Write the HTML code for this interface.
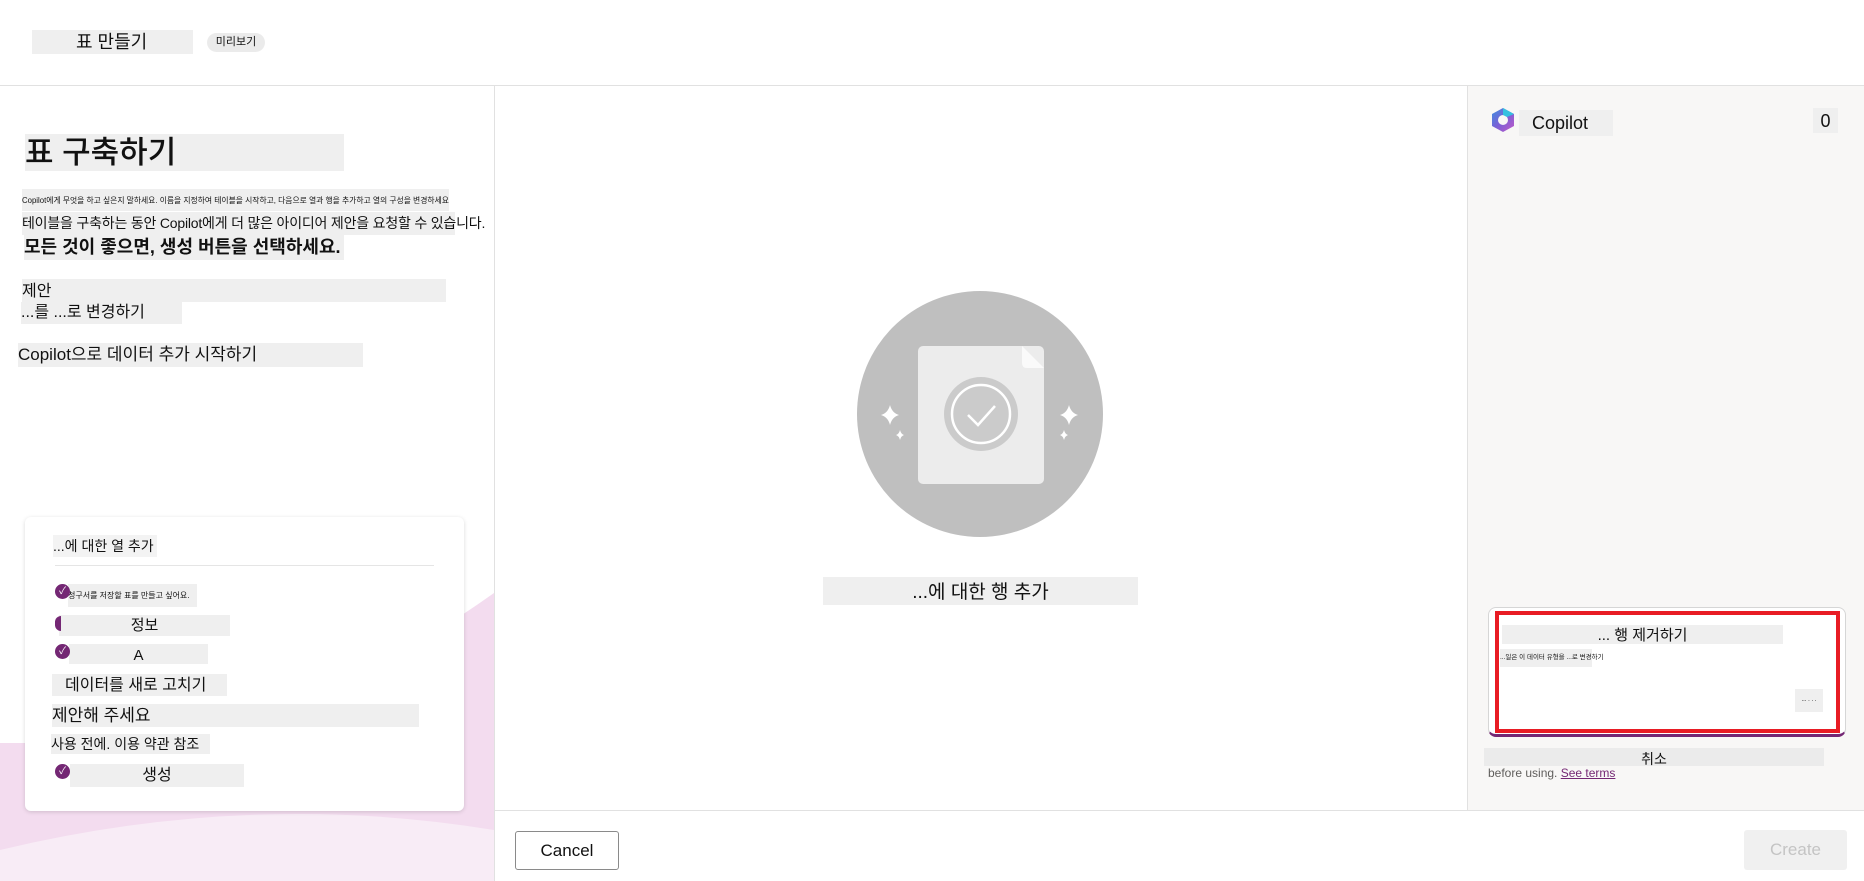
<!DOCTYPE html>
<html><head><meta charset="utf-8"><style>
*{margin:0;padding:0;box-sizing:border-box}
body{width:1864px;height:881px;background:#fff;font-family:"Liberation Sans","Noto Sans CJK KR",sans-serif;color:#111;position:relative;overflow:hidden}
.a{position:absolute;white-space:nowrap;overflow:visible}
.g{background:#efefef}
</style></head><body>
<div class="a g" style="left:32px;top:30px;width:161px;height:24px;font-size:18px;line-height:24px;padding-left:44px">표 만들기</div>
<div class="a" style="left:207px;top:33px;width:58px;height:19px;background:#ebebeb;border-radius:10px;font-size:11px;line-height:19px;text-align:center">미리보기</div>
<div class="a" style="left:0;top:85px;width:1864px;height:1px;background:#e1e1e1"></div>

<!-- left panel -->
<div class="a" style="left:494px;top:85px;width:1px;height:796px;background:#e1e1e1"></div>
<svg class="a" style="left:0;top:580px" width="494" height="301"><path d="M0 163 L150 163 Q330 130 494 13 L494 301 L0 301Z" fill="#f3dcef"/><path d="M0 301 L0 270 Q250 210 494 250 L494 301Z" fill="#f8ecf6"/></svg>
<div class="a g" style="left:25px;top:134px;width:319px;height:37px;font-size:31px;line-height:37px;font-weight:bold;font-weight:500">표 구축하기</div>
<div class="a g" style="left:22px;top:189px;width:427px;height:22px;font-size:7.8px;line-height:24px;overflow:hidden">Copilot에게 무엇을 하고 싶은지 말하세요. 이름을 지정하여 테이블을 시작하고, 다음으로 열과 행을 추가하고 열의 구성을 변경하세요.</div>
<div class="a g" style="left:22px;top:212px;width:433px;height:23px;font-size:14px;line-height:23px;letter-spacing:-0.2px">테이블을 구축하는 동안 Copilot에게 더 많은 아이디어 제안을 요청할 수 있습니다.</div>
<div class="a g" style="left:24px;top:235px;width:320px;height:25px;font-size:18px;line-height:25px;font-weight:bold">모든 것이 좋으면, 생성 버튼을 선택하세요.</div>
<div class="a g" style="left:22px;top:279px;width:424px;height:23px;font-size:16px;line-height:26px">제안</div>
<div class="a g" style="left:21px;top:302px;width:161px;height:22px;font-size:16px;line-height:22px">...를 ...로 변경하기</div>
<div class="a g" style="left:18px;top:343px;width:345px;height:24px;font-size:17px;line-height:24px">Copilot으로 데이터 추가 시작하기</div>

<div class="a" style="left:25px;top:517px;width:439px;height:294px;background:#fff;border-radius:6px;box-shadow:0 1px 4px rgba(0,0,0,.15)"></div>
<div class="a g" style="left:53px;top:535px;width:104px;height:22px;font-size:14px;line-height:22px;background:#f3f3f3">...에 대한 열 추가</div>
<div class="a" style="left:55px;top:565px;width:379px;height:1px;background:#e5e5e5"></div>
<div class="a g" style="left:68px;top:584px;width:129px;height:23px;font-size:8px;line-height:24px">청구서를 저장할 표를 만들고 싶어요.</div>
<div class="a g" style="left:59px;top:615px;width:171px;height:21px;font-size:15px;line-height:22px;text-align:center">정보</div>
<div class="a g" style="left:69px;top:644px;width:139px;height:20px;font-size:15px;line-height:24px;text-align:center">A</div>
<div class="a g" style="left:52px;top:674px;width:175px;height:22px;font-size:16px;line-height:24px;padding-left:13px">데이터를 새로 고치기</div>
<div class="a g" style="left:52px;top:704px;width:367px;height:23px;font-size:17px;line-height:23px">제안해 주세요</div>
<div class="a g" style="left:51px;top:734px;width:159px;height:20px;font-size:14px;line-height:20px">사용 전에. 이용 약관 참조</div>
<div class="a g" style="left:70px;top:764px;width:174px;height:23px;font-size:16px;line-height:24px;text-align:center">생성</div>
<div class="a" style="left:55px;top:584px;width:15px;height:15px;border-radius:50%;background:#742774;color:#fff;font-size:10px;line-height:15px;text-align:center">✓</div>
<div class="a" style="left:55px;top:616px;width:6px;height:15px;border-radius:8px 0 0 8px;background:#742774"></div>
<div class="a" style="left:55px;top:644px;width:15px;height:15px;border-radius:50%;background:#742774;color:#fff;font-size:10px;line-height:15px;text-align:center">✓</div>
<div class="a" style="left:55px;top:764px;width:15px;height:15px;border-radius:50%;background:#742774;color:#fff;font-size:10px;line-height:15px;text-align:center">✓</div>

<!-- center -->
<svg class="a" style="left:855px;top:292px" width="250" height="245">
<circle cx="125" cy="122" r="123" fill="#bfbfbf"/>
<rect x="63" y="54" width="126" height="138" rx="5" fill="#ececec"/>
<path d="M167 54 L189 76 L172 76 Q167 76 167 71Z" fill="#fafafa"/>
<circle cx="126" cy="122" r="37" fill="#cbcbcb"/>
<circle cx="126" cy="122" r="29" fill="none" stroke="#fff" stroke-width="2.5"/>
<path d="M113 123 L123 133 L140 114" fill="none" stroke="#fff" stroke-width="2.5"/>
<path d="M35 113 Q37 121 44 123 Q37 125 35 133 Q33 125 26 123 Q33 121 35 113Z" fill="#fff"/>
<path d="M45 138 Q46 142 49 143 Q46 144 45 148 Q44 144 41 143 Q44 142 45 138Z" fill="#fff"/>
<path d="M214 113 Q216 121 223 123 Q216 125 214 133 Q212 125 205 123 Q212 121 214 113Z" fill="#fff"/>
<path d="M209 138 Q210 142 213 143 Q210 144 209 148 Q208 144 205 143 Q208 142 209 138Z" fill="#fff"/>
</svg>
<div class="a g" style="left:823px;top:577px;width:315px;height:28px;font-size:19px;line-height:32px;text-align:center">...에 대한 행 추가</div>

<!-- footer -->
<div class="a" style="left:495px;top:810px;width:1369px;height:1px;background:#e1e1e1"></div>
<div class="a" style="left:515px;top:831px;width:104px;height:39px;border:1px solid #8a8a8a;border-radius:3px;font-size:17px;line-height:37px;text-align:center">Cancel</div>
<div class="a" style="left:1744px;top:830px;width:103px;height:40px;background:#f0f0f0;border-radius:3px;color:#c4c4c4;font-size:17px;line-height:40px;text-align:center">Create</div>

<!-- right panel -->
<div class="a" style="left:1467px;top:86px;width:397px;height:724px;background:#f8f7f6;border-left:1px solid #e1e1e1"></div>
<svg class="a" style="left:1490px;top:107px" width="26" height="26" viewBox="0 0 26 26">
<defs><linearGradient id="c" x1="0" y1="0" x2="1" y2="1"><stop offset="0" stop-color="#3d8fe0"/><stop offset=".5" stop-color="#7b5fd6"/><stop offset="1" stop-color="#c25bc8"/></linearGradient></defs>
<path d="M13 1 L24 7 L24 19 L13 25 L2 19 L2 7Z" fill="url(#c)"/><circle cx="13" cy="13" r="5" fill="#f8f7f6"/><path d="M13 1 L24 7 L17 10 L13 8Z" fill="#35c0e0"/></svg>
<div class="a g" style="left:1519px;top:110px;width:94px;height:26px;font-size:18px;line-height:26px;padding-left:13px">Copilot</div>
<div class="a g" style="left:1813px;top:108px;width:25px;height:25px;font-size:18px;line-height:27px;text-align:center">0</div>

<div class="a" style="left:1488px;top:607px;width:358px;height:130px;background:#fff;border:1px solid #d6d6d6;border-radius:8px;border-bottom:3px solid #742774"></div>
<div class="a" style="left:1495px;top:611px;width:345px;height:122px;border:4px solid #e81c24"></div>
<div class="a g" style="left:1502px;top:625px;width:281px;height:19px;font-size:15px;line-height:21px;text-align:center">... 행 제거하기</div>
<div class="a g" style="left:1500px;top:649px;width:92px;height:18px;font-size:6.5px;line-height:18px">...일은 이 데이터 유형을 ...로 변경하기</div>
<div class="a g" style="left:1795px;top:689px;width:28px;height:23px;font-size:6px;line-height:23px;text-align:center">... . . .</div>
<div class="a" style="left:1484px;top:748px;width:340px;height:18px;background:#ebebeb;font-size:14px;line-height:22px;text-align:center">취소</div>
<div class="a" style="left:1488px;top:766px;font-size:12px;line-height:14px;color:#605e5c">before using. <span style="color:#742774;text-decoration:underline">See terms</span></div>
</body></html>
